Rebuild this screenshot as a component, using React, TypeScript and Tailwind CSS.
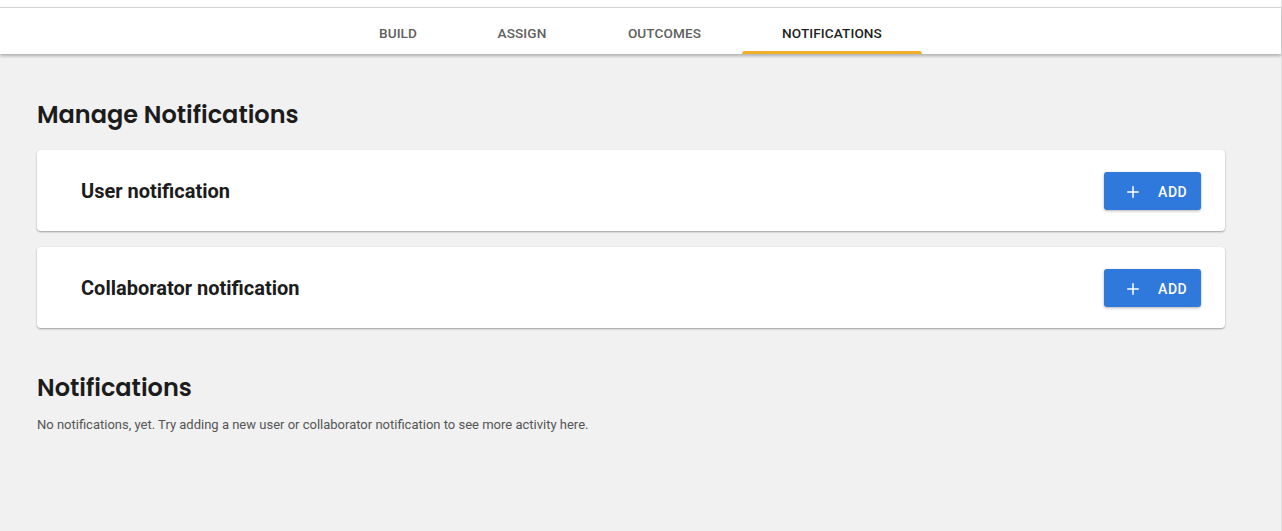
import { Plus } from 'lucide-react';

const TABS = [
  { label: 'BUILD', width: 'w-[118px]', active: false },
  { label: 'ASSIGN', width: 'w-[130px]', active: false },
  { label: 'OUTCOMES', width: 'w-[155px]', active: false },
  { label: 'NOTIFICATIONS', width: 'w-[180px]', active: true },
];

const SECTIONS = ['User notification', 'Collaborator notification'];

const heading = "font-['Poppins','Inter',sans-serif]";

export default function App() {
  return (
    <div className="min-h-[531px] bg-[#f1f1f1] font-['Roboto',sans-serif] border-r border-[#e2e2e2]">
      {/* Top strip + tab bar */}
      <div className="h-[7px] bg-white" />
      <div className="border-t border-[#d4d4d4] bg-white shadow-[0_2px_3px_rgba(0,0,0,0.28)]">
        <nav className="flex h-[46px] pl-[339px]">
          {TABS.map((tab) => (
            <div
              key={tab.label}
              className={`relative flex items-center justify-center pt-[4px] ${tab.width} text-[13.6px] font-medium tracking-[0.1px] ${
                tab.active ? 'text-[#1f1f1f]' : 'text-[#606060]'
              }`}
            >
              {tab.label}
              {tab.active && (
                <span className="absolute bottom-0 left-0 right-0 h-[3px] rounded-t-sm bg-[#f0b02a]" />
              )}
            </div>
          ))}
        </nav>
      </div>

      <main className="pl-[37px] pr-[56px] pt-[45px]">
        <h1 className={`${heading} text-[24px] font-semibold leading-[32px] text-[#1c1c1c]`}>
          Manage Notifications
        </h1>

        <div className="mt-[19px] flex flex-col gap-[16px]">
          {SECTIONS.map((title) => (
            <div
              key={title}
              className="flex h-[81px] items-center justify-between rounded-[4px] bg-white pl-[44px] pr-[24px] shadow-[0_1px_2px_rgba(0,0,0,0.35)]"
            >
              <h2 className="text-[20px] font-bold text-[#1c1c1c]">{title}</h2>
              <button className="flex h-[38px] w-[97px] items-center gap-[16px] rounded-[3px] bg-[#2f78dc] pl-[20px] pt-[2px] text-[14px] font-medium leading-none tracking-[0.6px] text-white shadow-[0_1px_3px_rgba(0,0,0,0.3)]">
                <Plus size={18} strokeWidth={2} />
                ADD
              </button>
            </div>
          ))}
        </div>

        <h1 className={`${heading} mt-[44px] text-[24px] font-semibold leading-[32px] text-[#1c1c1c]`}>
          Notifications
        </h1>
        <p className="mt-[11px] text-[13px] text-[#555]">
          No notifications, yet. Try adding a new user or collaborator notification to see more activity here.
        </p>
      </main>
    </div>
  );
}
